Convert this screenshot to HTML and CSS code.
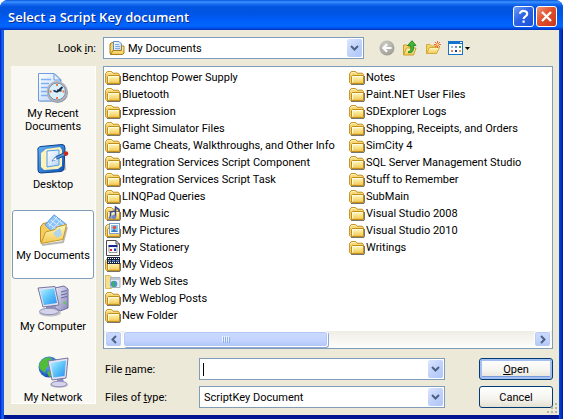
FILE: index.html
```html
<!DOCTYPE html>
<html lang="en">
<head>
<meta charset="utf-8">
<meta name="viewport" content="width=device-width, initial-scale=1">
<title>Select a Script Key document</title>
<link rel="stylesheet" href="styles.css">
</head>
<body>
<svg class="defs" aria-hidden="true">
  <defs>
    <linearGradient id="gFolder" x1="0" y1="0" x2="0" y2="1"><stop offset="0" stop-color="#fffbc4"/><stop offset="1" stop-color="#f3c74e"/></linearGradient>
    <linearGradient id="gScreen" x1="0" y1="0" x2="1" y2="1"><stop offset="0" stop-color="#b8f0ff"/><stop offset=".5" stop-color="#5cc4fa"/><stop offset="1" stop-color="#2d8fee"/></linearGradient>
    <linearGradient id="gCase" x1="0" y1="0" x2="1" y2="1"><stop offset="0" stop-color="#eeeefc"/><stop offset="1" stop-color="#8583b4"/></linearGradient>
    <linearGradient id="gPaper" x1="0" y1="0" x2="1" y2="1"><stop offset="0" stop-color="#ffffff"/><stop offset="1" stop-color="#b5d3fa"/></linearGradient>
    <linearGradient id="gDesk" x1="0" y1="0" x2="1" y2="1"><stop offset="0" stop-color="#63b4f5"/><stop offset="1" stop-color="#0a50b4"/></linearGradient>
    <radialGradient id="gGlobe" cx=".4" cy=".35" r=".7"><stop offset="0" stop-color="#6cc0ff"/><stop offset="1" stop-color="#0b3fae"/></radialGradient>
    <radialGradient id="gBack" cx=".4" cy=".3" r=".8"><stop offset="0" stop-color="#cfcec8"/><stop offset="1" stop-color="#989790"/></radialGradient>
  </defs>
  <symbol id="folder" viewBox="0 0 16 16">
    <path d="M2 14.5H14.5L15.5 13V6" fill="none" stroke="#77766c" stroke-width="1.2"/>
    <path d="M.6 12.5V3.6L2.2 1.6H6.6L8 3.2H13L14.5 4.6V13.4H1.500Z" fill="#f6d774" stroke="#c08f20"/>
    <path d="M1.6 4.2L2.6 2.6H6.2L7.6 4.2" fill="none" stroke="#fff3b0"/>
    <path d="M2.5 6.5L3.4 5.5H14.5V13.4H2.5Z" fill="url(#gFolder)" stroke="#c08c1c"/>
    <path d="M3.6 12.5V6.6H13.6" fill="none" stroke="#fffde4"/>
  </symbol>
  <symbol id="chev" viewBox="0 0 9 6"><path d="M1 1L4.5 4.5L8 1" fill="none" stroke="#4d6185" stroke-width="2"/></symbol>
</svg>

<main class="window">
  <header class="titlebar">
    <h1>Select a Script Key document</h1>
    <button class="cap help" type="button" aria-label="Help"><svg viewBox="0 0 19 19"><path d="M6 6.8C6 3 13.2 3 13.2 7C13.2 9.5 9.6 9.3 9.6 12M9.6 13.6V15.8" fill="none" stroke="#fff" stroke-width="2.2"/></svg></button>
    <button class="cap close" type="button" aria-label="Close"><svg viewBox="0 0 19 19"><path d="M5 5L14 14M14 5L5 14" stroke="#fff" stroke-width="2.4"/></svg></button>
  </header>

  <form class="content">
    <div class="lookin">
      <label for="look">Look <u>i</u>n:</label>
      <div class="combo with-icon">
        <svg class="field-icon" viewBox="0 0 16 16">
          <path d="M1 13.5V4L3 2.5H6V13.5Z" fill="#f5d366" stroke="#a97d1a"/>
          <path d="M4.5 12V1.5H10L12.5 4V12Z" fill="url(#gPaper)" stroke="#5d8cc9"/>
          <path d="M6 4.5H10M6 6.5H11M6 8.5H11" stroke="#7cabe6"/>
          <path d="M1.5 14.5L4 10.5H12.5V6H15V13L13.5 14.5Z" fill="url(#gFolder)" stroke="#a97d1a"/>
        </svg>
        <select id="look"><option>My Documents</option></select>
        <span class="drop"><svg><use href="#chev"/></svg></span>
      </div>
      <div class="tools">
        <button type="button" aria-label="Back" disabled><svg viewBox="0 0 16 16"><circle cx="8" cy="8" r="7.5" fill="url(#gBack)"/><path d="M12.5 8H5M8 4.3L4.3 8L8 11.7" fill="none" stroke="#fff" stroke-width="2"/></svg></button>
        <button type="button" aria-label="Up one level"><svg viewBox="0 0 16 16"><path d="M1.5 14.5V5H5L6.5 6.5H11V14.5Z" fill="#f5d366" stroke="#caa02c"/><path d="M1.5 15L4.5 8H14L11.5 15Z" fill="url(#gFolder)" stroke="#caa02c"/><path d="M6.5 11.5C9.5 11.5 8.8 8 8.5 5.5H5.5L10 .7L14 5.5H11.5C12 9 11.5 13 6.5 12.8Z" fill="#3fb838" stroke="#187a1b" stroke-width=".8"/></svg></button>
        <button type="button" aria-label="Create new folder"><svg viewBox="0 0 16 16"><path d="M1.5 13.5V4.5H5L6.5 6H11.5V13.5Z" fill="#f5d366" stroke="#d3ab3c"/><path d="M1.5 13.5L4.5 7.5H14.5L11.5 13.5Z" fill="url(#gFolder)" stroke="#d3ab3c"/><path d="M12.5 1V8M9 4.5H16M10 2L15 7M15 2L10 7" stroke="#f0603a"/><circle cx="12.5" cy="4.5" r="1.3" fill="#ffe27a"/></svg></button>
        <button class="views" type="button" aria-label="View menu"><svg viewBox="0 0 23 16"><rect x=".5" y="1.5" width="14" height="13" fill="#fff" stroke="#1673cc"/><path d="M0 1H15V4H0Z" fill="#1673cc"/><path d="M12 2H14V3H12Z" fill="#fff"/><path d="M3 6h2v2H3Z" fill="#a3b5d3"/><path d="M7 6h2v2H7Z" fill="#8b7fd0"/><path d="M11 6h2v2h-2Z" fill="#31a13a"/><path d="M3 10h2v2H3Z" fill="#df7d65"/><path d="M7 10h2v2H7Z" fill="#173f9b"/><path d="M11 10h2v2h-2Z" fill="#e5a53a"/><path d="M17 7H22L19.500 10Z" fill="#000"/></svg></button>
      </div>
    </div>

    <nav class="places" aria-label="Places">
      <button type="button"><svg viewBox="0 0 32 32">
        <path d="M3 30V2H19L25 8V30Z" fill="#9a9fa8" opacity=".5"/>
        <path d="M1.500 29V1.500H17L23.500 8V29Z" fill="url(#gPaper)" stroke="#6b9be3"/>
        <path d="M17 1.500V8H23.500Z" fill="#e5f1ff" stroke="#6b9be3"/>
        <path d="M4 7.500H14M4 11.500H12M4 15.500H11M4 19.500H10M4 23.500H11" stroke="#7daff2" stroke-width="1.500"/>
        <circle cx="20.500" cy="20.500" r="10.500" fill="#8f949d"/><circle cx="20" cy="19.500" r="10.500" fill="#b1b6bf"/>
        <circle cx="20" cy="19.500" r="8.500" fill="#d8f0fd" stroke="#7c8ca6"/>
        <path d="M20 12V14M20 25V27M12.500 19.500H14.500M25.500 19.500H27.500" stroke="#f06f2d" stroke-width="1.800"/>
        <path d="M20 20L25.500 15M20 20L16.500 18.500M24.500 18.500H20" stroke="#172d4a" stroke-width="1.800"/>
      </svg><span>My Recent<br>Documents</span></button>
      <button type="button"><svg viewBox="0 0 32 32">
        <path d="M3 30L2 7L27 3L29 27Z" fill="#8c8d91" opacity=".6"/>
        <path d="M1 8Q0 4 4 3.500L25 1.500Q28 1.500 28 5L27 25Q27 28 24 28.500L4 30Q1 30 1 27Z" fill="url(#gDesk)" stroke="#0b418f"/>
        <path d="M4 10L9 6L23 4L25 7V23L21 26L7 27L4 24Z" fill="#fff1ba"/>
        <path d="M10 8L22 7V22L10 24Z" fill="url(#gPaper)" stroke="#4d9de2"/>
        <path d="M15 18L19 13.500L28 9.500L29.500 12L20 16Z" fill="#4f95d9" stroke="#1d4e91"/>
        <path d="M15 18L18.500 14.500L20 16.500Z" fill="#fff"/><circle cx="29" cy="10.500" r="2.300" fill="#c72d19"/>
      </svg><span>Desktop</span></button>
      <button type="button" class="current" aria-current="true"><svg viewBox="0 0 32 32">
        <path d="M5 31L26 28L30 13" fill="none" stroke="#8b8a80" stroke-width="2" opacity=".6"/>
        <path d="M3.500 28V13L6 9.500L11 8.500L13 11L25 8V24Z" fill="#f5ce5d" stroke="#bd8c22"/>
        <path d="M8 11L17 .8L29 10L20 22Z" fill="#8fc3f8" stroke="#5c9fe4"/>
        <path d="M17 3L27 11M14 6L24 14M11 9L21 17M12 12L20 3M15 15L24 6" stroke="#d5edff"/>
        <path d="M4 29.500L8.500 18L18 15.500L20 13L29.500 10.500L26 25.500Z" fill="url(#gFolder)" stroke="#c79727"/>
        <path d="M16 19L23 14L25 21L20 24Z" fill="#a8d3f8" opacity=".9"/>
      </svg><span>My Documents</span></button>
      <button type="button"><svg viewBox="0 0 32 32">
        <ellipse cx="13" cy="28" rx="11" ry="3.500" fill="#8d8d99" opacity=".5"/>
        <path d="M18 3L27 1L31 4V23L23 26L18 23Z" fill="url(#gCase)" stroke="#6e6ca3"/>
        <path d="M24 7L30 5.500M24 10L30 8.500M24 13L30 11.500" stroke="#6664a0"/><circle cx="27.500" cy="18" r="1.200" fill="#51d343"/>
        <path d="M9 19H17L18 25L9 25Z" fill="#8f8ebb"/><ellipse cx="12" cy="26.500" rx="9.500" ry="3.200" fill="#d4d3ea" stroke="#8f8ebb"/>
        <path d="M1 3L18 1.500L22 20L6 22Z" fill="#e2e2f3" stroke="#77779f"/><path d="M3 5L17 3.500L20 18L7 20Z" fill="url(#gScreen)"/>
      </svg><span>My Computer</span></button>
      <button type="button"><svg viewBox="0 0 32 32">
        <circle cx="12" cy="11" r="10.500" fill="url(#gGlobe)"/>
        <path d="M4 5Q9 0 15 2L12 6L14 9L9 12L8 17L3 13Q1 9 4 5ZM10 16L15 14L16 20L12 21Z" fill="#52bb39"/>
        <ellipse cx="22" cy="29" rx="9" ry="2.800" fill="#8d8d99" opacity=".5"/>
        <path d="M20 21H26L27 28H20Z" fill="#8f8ebb"/><ellipse cx="22" cy="28" rx="8" ry="2.800" fill="#d4d3ea" stroke="#8f8ebb"/>
        <path d="M11 5L31 2L29 22L15 24Z" fill="#e2e2f3" stroke="#77779f"/><path d="M13.500 7L29 4.500L27.500 20L16.500 21.500Z" fill="url(#gScreen)"/>
      </svg><span>My Network</span></button>
    </nav>

    <section class="pane">
      <div class="listbox">
        <ul class="files">
          <li><svg><use href="#folder"/></svg>Benchtop Power Supply</li>
          <li><svg><use href="#folder"/></svg>Bluetooth</li>
          <li><svg><use href="#folder"/></svg>Expression</li>
          <li><svg><use href="#folder"/></svg>Flight Simulator Files</li>
          <li><svg><use href="#folder"/></svg>Game Cheats, Walkthroughs, and Other Info</li>
          <li><svg><use href="#folder"/></svg>Integration Services Script Component</li>
          <li><svg><use href="#folder"/></svg>Integration Services Script Task</li>
          <li><svg><use href="#folder"/></svg>LINQPad Queries</li>
          <li><svg viewBox="0 0 16 16"><use href="#folder"/><path d="M10.500 11V1L14 3.500V6M5.500 12V6L10 5" fill="none" stroke="#35458e" stroke-width="1.500"/><circle cx="9" cy="11" r="2.200" fill="#7583c8"/><circle cx="5" cy="11.500" r="1.500" fill="#7583c8"/></svg>My Music</li>
          <li><svg viewBox="0 0 16 16"><use href="#folder"/><rect x="4.500" y=".5" width="10" height="10" fill="#fff" stroke="#7c9dc8"/><rect x="6" y="2" width="7" height="7" fill="#82c6f5"/><circle cx="9.500" cy="4.500" r="1.800" fill="#df5038"/><path d="M6 9L9 6L13 9Z" fill="#3c79c0"/></svg>My Pictures</li>
          <li><svg viewBox="0 0 16 16"><path d="M1.500 .5H11L14.500 4V15.500H1.500Z" fill="#fff" stroke="#4b4b4b"/><path d="M11 .5V4H14.500" fill="none" stroke="#4b4b4b"/><path d="M4 5.500H12V12.500H4Z" fill="#fff" stroke="#9a9a9a"/><path d="M3.500 5H12.500V7H3.500Z" fill="#102a90"/><path d="M5 9H7V11H5Z" fill="#d22"/><path d="M9 8.500H11V11H9Z" fill="#1738c8"/></svg>My Stationery</li>
          <li><svg viewBox="0 0 16 16"><use href="#folder"/><path d="M2 0H15V7H2Z" fill="#18223d"/><path d="M3 1.500H15M3 5.500H15" stroke="#fff" stroke-dasharray="1 1"/><path d="M3 3H6V4.500H3ZM7 3H10V4.500H7ZM11 3H14V4.500H11Z" fill="#5d8cc9"/></svg>My Videos</li>
          <li><svg viewBox="0 0 16 16"><path d="M.5 1.500H5L6.500 3V14.500H.5Z" fill="#f4df91" stroke="#d9bd62"/><path d="M5.500 3.500H15V13.500H5.500Z" fill="#e9edf2" stroke="#a9b1ba"/><path d="M6 4H15V6H6Z" fill="#bfc8d2"/><circle cx="9" cy="10" r="3.300" fill="#4296d8"/><path d="M7 8L10 7L9 10L11 12L8 13Z" fill="#43ae51"/></svg>My Web Sites</li>
          <li><svg><use href="#folder"/></svg>My Weblog Posts</li>
          <li><svg><use href="#folder"/></svg>New Folder</li>
          <li><svg><use href="#folder"/></svg>Notes</li>
          <li><svg><use href="#folder"/></svg>Paint.NET User Files</li>
          <li><svg><use href="#folder"/></svg>SDExplorer Logs</li>
          <li><svg><use href="#folder"/></svg>Shopping, Receipts, and Orders</li>
          <li><svg><use href="#folder"/></svg>SimCity 4</li>
          <li><svg><use href="#folder"/></svg>SQL Server Management Studio</li>
          <li><svg><use href="#folder"/></svg>Stuff to Remember</li>
          <li><svg><use href="#folder"/></svg>SubMain</li>
          <li><svg><use href="#folder"/></svg>Visual Studio 2008</li>
          <li><svg><use href="#folder"/></svg>Visual Studio 2010</li>
          <li><svg><use href="#folder"/></svg>Writings</li>
        </ul>
        <div class="scrollbar">
          <button type="button" aria-label="Scroll left"><svg viewBox="0 0 6 9"><path d="M5 1L1.500 4.500L5 8" fill="none" stroke="#4d6185" stroke-width="2"/></svg></button>
          <div class="track"><div class="thumb"><svg viewBox="0 0 8 7"><path d="M.5 0V6M2.500 0V6M4.500 0V6M6.500 0V6" stroke="#eef4fe"/><path d="M1.500 1V7M3.500 1V7M5.500 1V7M7.500 1V7" stroke="#8cb0f8"/></svg></div></div>
          <button type="button" aria-label="Scroll right"><svg viewBox="0 0 6 9"><path d="M1 1L4.500 4.500L1 8" fill="none" stroke="#4d6185" stroke-width="2"/></svg></button>
        </div>
      </div>

      <div class="fields">
        <label for="fname">File <u>n</u>ame:</label>
        <div class="combo caret"><input id="fname" type="text"><span class="drop"><svg><use href="#chev"/></svg></span></div>
        <button class="btn default" type="submit"><span><u>O</u>pen</span></button>
        <label for="ftype">Files of <u>t</u>ype:</label>
        <div class="combo"><select id="ftype"><option>ScriptKey Document</option></select><span class="drop"><svg><use href="#chev"/></svg></span></div>
        <button class="btn" type="button"><span>Cancel</span></button>
      </div>
    </section>
    <svg class="grip" viewBox="0 0 12 12" aria-hidden="true"><path d="M9 1h2v2H9ZM5 5h2v2H5ZM9 5h2v2H9ZM1 9h2v2H1ZM5 9h2v2H5ZM9 9h2v2H9Z" fill="#b8b4a2"/></svg>
  </form>
</main>
</body>
</html>
```
FILE: styles.css
```css
* { box-sizing: border-box; }
html, body { height: 100%; }
body {
  margin: 0;
  background: #fff;
  color: #000;
  font: 11px/13px Roboto, "Liberation Sans", Arial, sans-serif;
}
button, input, select { font: inherit; color: inherit; margin: 0; padding: 0; }
button { background: none; border: 0; }
svg { display: block; flex: none; }
.defs { position: absolute; width: 0; height: 0; }

.window {
  display: flex;
  flex-direction: column;
  min-height: 100vh;
  overflow: hidden;
  border-radius: 8px 8px 0 0;
  background: linear-gradient(90deg, #0019cf 0, #0831d9 1px, #166aee 2px, #0855dd 4px, #0855dd calc(100% - 4px), #0441d8 calc(100% - 3px), #0029b5 calc(100% - 1px), #001590 100%);
}

.titlebar {
  display: flex;
  align-items: center;
  gap: 2px;
  height: 30px;
  padding: 3px 6px 0 8px;
  background: linear-gradient(#0a55dc 0, #3a93ff 2px, #1a6cf0 4px, #0055e0 7px, #0054e3 13px, #005bf5 19px, #0066ff 25px, #0060fa 27px, #0040d0 29px, #0034bb 30px);
}
.titlebar h1 {
  flex: 1;
  margin: 0;
  color: #fff;
  font: 600 13px/18px "Open Sans", "Noto Sans", sans-serif;
  text-shadow: 1px 1px 0 #0a2d91;
}
.cap {
  width: 21px;
  height: 21px;
  border: 1px solid #fff;
  border-radius: 3px;
}
.cap svg { width: 19px; height: 19px; }
.help { background: linear-gradient(135deg, #6f9cf5, #2e63e6 45%, #1b4fd8); }
.close { background: linear-gradient(135deg, #f0957a, #e0502c 45%, #c8371a); }

.content {
  position: relative;
  flex: 1;
  display: grid;
  grid-template-columns: 85px minmax(0, 1fr);
  grid-template-rows: 22px minmax(0, 1fr);
  gap: 7px;
  margin: 0 4px;
  padding: 7px 6px 7px 7px;
  background: #ece9d8;
  border-bottom: 4px solid;
  border-image: linear-gradient(#0855dd, #0441d8 50%, #001590) 0 0 4;
}

.lookin {
  grid-column: 1 / -1;
  display: grid;
  grid-template-columns: 85px minmax(0, 1fr) 182px;
  column-gap: 7px;
  align-items: center;
}
.lookin label { text-align: right; }

.combo {
  position: relative;
  display: flex;
  align-items: center;
  height: 22px;
  padding: 1px;
  border: 1px solid #7f9db9;
  background: #fff;
}
.combo select, .combo input {
  flex: 1;
  min-width: 0;
  height: 18px;
  padding: 0 3px;
  border: 0;
  outline: 0;
  background: none;
  appearance: none;
}
.with-icon { padding-left: 5px; }
.field-icon { width: 16px; height: 16px; }
.drop {
  display: grid;
  place-items: center;
  width: 15px;
  height: 18px;
  border-radius: 2px;
  background: linear-gradient(135deg, #dbe6ff, #c1d2fb 50%, #aec6f8);
  pointer-events: none;
}
.drop svg { width: 9px; height: 6px; }
.caret::before {
  content: "";
  position: absolute;
  left: 3px;
  width: 1px;
  height: 13px;
  background: #000;
}

.tools {
  display: flex;
  align-items: center;
  gap: 7px;
  padding-left: 8px;
}
.tools svg { width: 16px; height: 16px; }
.tools .views svg { width: 23px; }

.places {
  display: flex;
  flex-direction: column;
  gap: 2px;
  height: 0;
  min-height: calc(100% - 4px);
  overflow: hidden;
  padding: 2px 1px 0;
  background: #f9f8f3;
  border-right: 1px solid #fff;
  border-bottom: 1px solid #fff;
}
.places button {
  flex: none;
  display: flex;
  flex-direction: column;
  align-items: center;
  gap: 3px;
  height: 69px;
  padding-top: 3px;
  border: 1px solid transparent;
  border-radius: 3px;
}
.places svg { width: 32px; height: 32px; }
.places .current { background: #fff; border-color: #7f9db9; }

.pane { display: flex; flex-direction: column; gap: 9px; }
.listbox {
  flex: 1;
  display: flex;
  flex-direction: column;
  justify-content: space-between;
  border: 1px solid #7f9db9;
  background: #fff;
}
.files {
  display: grid;
  grid-auto-flow: column;
  grid-template-rows: repeat(15, 17px);
  grid-auto-columns: 244px;
  margin: 0;
  padding: 2px 1px 0;
  overflow: hidden;
  list-style: none;
}
.files li { display: flex; align-items: center; gap: 1px; white-space: nowrap; }
.files svg { width: 16px; height: 16px; }

.scrollbar {
  display: flex;
  gap: 1px;
  height: 17px;
  padding: 0 1px;
  background: linear-gradient(#efede5, #fefefb);
}
.scrollbar button, .thumb {
  display: grid;
  place-items: center;
  height: 16px;
  border: 1px solid #fff;
  border-radius: 3px;
  background: linear-gradient(#cbdafe, #c3d3fd 60%, #b0c7f8);
  box-shadow: inset 0 0 0 1px #b9cbf3;
}
.scrollbar button { width: 17px; }
.scrollbar button svg { width: 6px; height: 9px; }
.track { flex: 1; }
.thumb { width: 50%; box-shadow: inset 0 0 0 1px #b4c8f6, 1px 1px 0 #8fa9d6; }
.thumb svg { width: 8px; height: 7px; }

.fields {
  display: grid;
  grid-template-columns: 94px minmax(0, 1fr) 74px;
  row-gap: 6px;
  align-items: center;
  padding-left: 2px;
}
.fields .combo { margin-right: 34px; }
.btn {
  height: 22px;
  border: 1px solid #003c74;
  border-radius: 3px;
  background: linear-gradient(#fff, #f4f3ee 60%, #e4e0d2);
}
.default { box-shadow: inset 0 0 0 2px #a3bff0, inset 0 -3px 0 #7a9be0; }

.grip {
  position: absolute;
  right: 1px;
  bottom: 1px;
  width: 12px;
  height: 12px;
}
```
